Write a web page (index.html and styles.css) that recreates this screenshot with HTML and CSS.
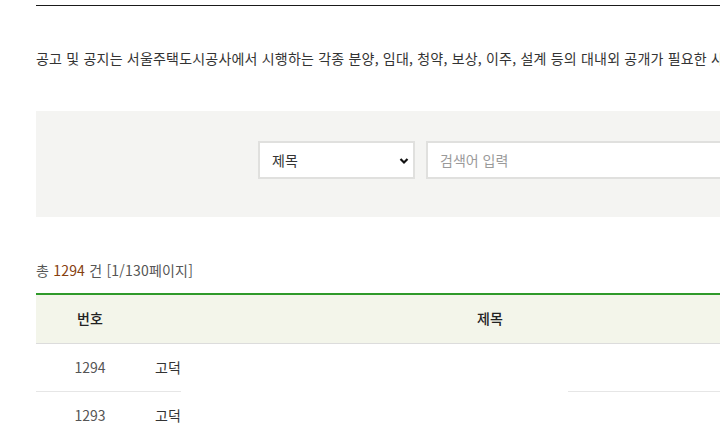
FILE: index.html
```html
<!DOCTYPE html>
<html lang="ko">
<head>
<meta charset="utf-8">
<title>공고 및 공지</title>
<link rel="stylesheet" href="styles.css">
</head>
<body>
<div class="page">
  <div class="top-rule"></div>
  <p class="intro">공고 및 공지는 서울주택도시공사에서 시행하는 각종 분양, 임대, 청약, 보상, 이주, 설계 등의 대내외 공개가 필요한 사항을 게시하는 곳입니다.</p>
  <form class="search">
    <div class="select-wrap">
      <select class="select">
        <option>제목</option>
        <option>내용</option>
      </select>
      <svg class="chev" width="10" height="8" viewBox="0 0 10 8"><path d="M1.5 2 L5 5.5 L8.5 2" fill="none" stroke="#111" stroke-width="2.2"/></svg>
    </div>
    <input class="query" type="text" placeholder="검색어 입력">
  </form>
  <p class="count">총 <strong class="num">1294</strong> 건 [1/130페이지]</p>
  <div class="table-wrap">
    <table class="board">
      <thead>
        <tr><th class="c-no">번호</th><th class="c-title">제목</th><th class="c-date">등록일</th><th class="c-view">조회</th></tr>
      </thead>
      <tbody>
        <tr><td class="c-no">1294</td><td class="c-title">고덕</td><td class="c-date">2024.05.10</td><td class="c-view">120</td></tr>
        <tr><td class="c-no">1293</td><td class="c-title">고덕</td><td class="c-date">2024.05.09</td><td class="c-view">98</td></tr>
      </tbody>
    </table>
    <div class="mask"></div>
  </div>
</div>
</body>
</html>
```
FILE: styles.css
```css
html, body {
  margin: 0;
  padding: 0;
  background: #fff;
  overflow: hidden;
}
body {
  font-family: "Noto Sans CJK KR", "Noto Sans", sans-serif;
  color: #333;
  font-size: 14px;
}
.page {
  width: 1150px;
  margin-left: 36px;
  padding-top: 5px;
}
.top-rule {
  height: 1px;
  background: #1a1a1a;
}
.intro {
  margin: 42px 0 0;
  line-height: 20px;
  font-size: 14px;
  letter-spacing: 0.2px;
  white-space: nowrap;
  color: #333;
}
.search {
  margin-top: 43px;
  height: 106px;
  box-sizing: border-box;
  background: #f4f4f2;
  display: flex;
  align-items: flex-start;
  padding: 30px 0 0 222px;
  gap: 11px;
}
.select-wrap {
  position: relative;
  width: 157px;
  height: 38px;
}
.select {
  appearance: none;
  -webkit-appearance: none;
  width: 100%;
  height: 100%;
  box-sizing: border-box;
  border: 2px solid #e0e0de;
  background: #fff;
  padding: 0 0 0 12px;
  font-family: inherit;
  font-size: 14px;
  color: #333;
  outline: none;
}
.chev {
  position: absolute;
  right: 6px;
  top: 16px;
  pointer-events: none;
}
.query {
  width: 420px;
  height: 38px;
  box-sizing: border-box;
  border: 2px solid #e0e0de;
  background: #fff;
  padding: 0 0 0 12px;
  font-family: inherit;
  font-size: 14px;
  color: #333;
  outline: none;
}
.query::placeholder {
  color: #9a9a9a;
}
.count {
  margin: 43px 0 0;
  line-height: 20px;
  font-size: 14px;
  letter-spacing: 0.2px;
  color: #555;
}
.count .num {
  font-weight: 400;
  color: #86400f;
}
.table-wrap {
  position: relative;
  margin-top: 13px;
}
.board {
  width: 100%;
  border-collapse: collapse;
  table-layout: fixed;
  border-top: 2px solid #2f9a2a;
}
.board th {
  height: 45px;
  background: #f3f5ea;
  font-weight: 500;
  color: #222;
  font-size: 14px;
  border-bottom: 1px solid #dcdcdc;
  padding: 0 0 3px;
}
.board td {
  height: 46px;
  border-bottom: 1px solid #e6e6e6;
  font-size: 14px;
  color: #555;
  padding: 0 0 1px;
}
.board .c-no { width: 108px; text-align: center; }
.board .c-title { width: 692px; }
.board th.c-title { text-align: center; }
.board td.c-title { padding-left: 11px; color: #333; }
.board .c-date { width: 200px; text-align: center; }
.board .c-view { text-align: center; }
.mask {
  position: absolute;
  left: 145px;
  top: 57px;
  width: 387px;
  height: 120px;
  background: #fff;
}
```
